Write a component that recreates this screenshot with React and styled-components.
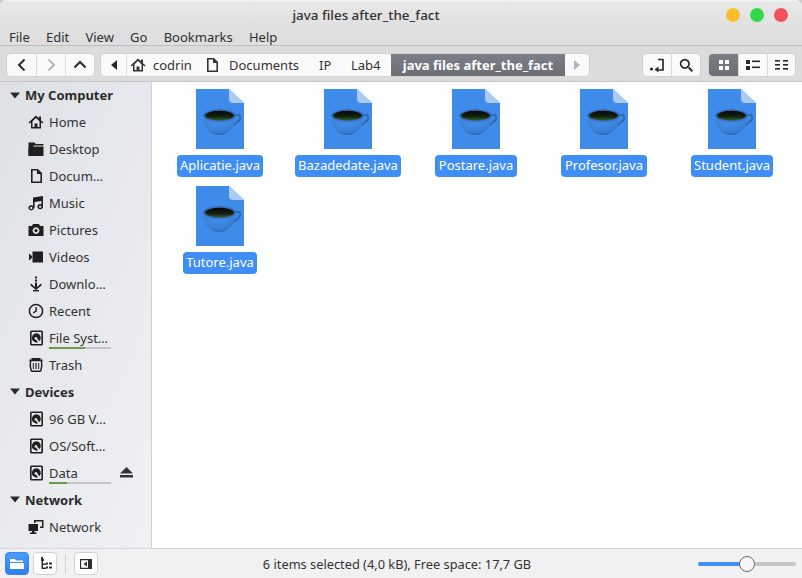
import React from 'react';
import styled, { createGlobalStyle } from 'styled-components';

const GlobalStyle = createGlobalStyle`
  html, body { margin: 0; padding: 0; background: #c9c9c9; }
  body { font-family: "Noto Sans", "Open Sans", sans-serif; font-size: 13px; color: #2f2f2f; }
`;

const Window = styled.div`
  width: 802px;
  height: 578px;
  display: flex;
  flex-direction: column;
  overflow: hidden;
  background: #dcdcdc;
  border-radius: 6px 6px 0 0;
`;

const TitleBar = styled.div`
  height: 26px;
  flex: none;
  padding: 2px 14px 0 0;
  box-sizing: border-box;
  display: flex;
  align-items: center;
  position: relative;
  background: linear-gradient(#e9e9e9, #e0e0e0);
  border-top: 1px solid #f2f2f2;
`;

const Title = styled.div`
  flex: 1;
  text-align: center;
  font-size: 13.4px;
  font-weight: 500;
  color: #303030;
  padding-left: 6px;
`;

const Lights = styled.div`
  display: flex;
  gap: 10px;
`;

const Light = styled.span`
  width: 14px;
  height: 14px;
  border-radius: 50%;
  background: ${p => p.$color};
`;

const MenuBar = styled.div`
  height: 20px;
  flex: none;
  display: flex;
  gap: 16.2px;
  padding: 2px 0 0 9px;
  box-sizing: border-box;
  align-items: center;
  background: #dfdfdf;
  border-bottom: 1px solid #bfbfbf;
  font-size: 13px;
`;

const Toolbar = styled.div`
  height: 36px;
  flex: none;
  box-sizing: border-box;
  display: flex;
  align-items: flex-start;
  padding: 8px 7px 0 7px;
  background: #dcdcdc;
  border-bottom: 1px solid #c4c4c4;
`;

const Group = styled.div`
  display: flex;
  height: 22px;
  background: #fafafa;
  border-radius: 4px;
  box-shadow: 0 0 0 1px #d2d2d2;
  margin-left: ${p => p.$gap || 0}px;
  overflow: hidden;
`;

const ToolButton = styled.div`
  width: ${p => p.$w || 29}px;
  height: 22px;
  display: flex;
  align-items: center;
  justify-content: center;
  color: ${p => (p.$active ? '#fff' : '#2a2a2a')};
  background: ${p => (p.$active ? 'linear-gradient(#7d7f87, #6c6e76)' : 'transparent')};
  border-left: ${p => (p.$first ? 'none' : '1px solid #dcdcdc')};
  box-sizing: border-box;
  flex: none;
`;

const Crumb = styled.div`
  height: 22px;
  display: flex;
  align-items: center;
  gap: ${p => p.$gap || 7}px;
  flex: none;
  width: ${p => p.$w}px;
  padding-left: ${p => p.$pad || 0}px;
  box-sizing: border-box;
  color: #333;
  border-left: ${p => (p.$divided ? '1px solid #dcdcdc' : 'none')};
`;

const ActiveCrumb = styled.div`
  width: 174px;
  height: 22px;
  flex: none;
  display: flex;
  align-items: center;
  justify-content: center;
  font-weight: 700;
  font-size: 13px;
  color: #fff;
  background: linear-gradient(#7d7f87, #6c6e76);
`;

const Body = styled.div`
  flex: 1;
  min-height: 0;
  display: flex;
  background: #fff;
`;

const Sidebar = styled.div`
  width: 152px;
  flex: none;
  box-sizing: border-box;
  background: linear-gradient(115deg, #dde1e6, #f0f1f4);
  border-right: 1px solid #d0d0d0;
`;

const Heading = styled.div`
  height: ${p => (p.$first ? 26 : 27)}px;
  display: flex;
  align-items: center;
  gap: 5px;
  padding-left: 10px;
  font-weight: 700;
  font-size: 13px;
  color: #2b2b2b;
`;

const Row = styled.div`
  height: 27px;
  display: flex;
  align-items: center;
  padding-left: 28px;
  position: relative;
  color: #333;
`;

const RowIcon = styled.span`
  width: 16px;
  height: 16px;
  margin-right: 5px;
  display: flex;
  color: #1f1f1f;
`;

const Capacity = styled.div`
  position: absolute;
  left: 49px;
  top: 23px;
  width: 62px;
  height: 2px;
  background: #c4c4c4;
`;

const CapacityFill = styled.div`
  height: 100%;
  background: #6b9b4a;
`;

const Eject = styled.span`
  position: absolute;
  left: 120px;
  top: 8px;
  display: flex;
`;

const FileGrid = styled.div`
  flex: 1;
  display: grid;
  grid-template-columns: repeat(5, 128px);
  grid-auto-rows: 97px;
  padding: 7px 0 0 4px;
  align-content: start;
`;

const FileItem = styled.div`
  display: flex;
  flex-direction: column;
  align-items: center;
`;

const FileLabel = styled.div`
  margin-top: 6px;
  height: 22px;
  line-height: 21px;
  padding: 0 3.5px;
  border-radius: 4px;
  background: #3f8ef5;
  color: #fff;
  font-size: 13px;
  white-space: nowrap;
`;

const StatusBar = styled.div`
  height: 30px;
  flex: none;
  box-sizing: border-box;
  display: flex;
  align-items: center;
  padding: 0 6px 0 5px;
  background: #f1f1f1;
  border-top: 1px solid #d6d6d6;
`;

const StatusButton = styled.div`
  width: 24px;
  height: 23px;
  margin-right: ${p => p.$mr || 0}px;
  border-radius: 4px;
  display: flex;
  align-items: center;
  justify-content: center;
  box-sizing: border-box;
  flex: none;
  background: ${p => (p.$active ? 'linear-gradient(#4a9bf8, #2f7fef)' : '#fff')};
  border: 1px solid ${p => (p.$active ? '#3a86ee' : '#d2d2d2')};
`;

const Divider = styled.div`
  width: 1px;
  height: 20px;
  background: #d2d2d2;
  margin-right: 8px;
`;

const StatusText = styled.div`
  flex: 1;
  text-align: center;
  font-size: 12.8px;
  color: #333;
  padding-right: 2px;
`;

const Slider = styled.div`
  width: 98px;
  height: 4px;
  border-radius: 2px;
  background: #c6c6c6;
  position: relative;
`;

const SliderFill = styled.div`
  height: 100%;
  border-radius: 2px;
  background: #3f8ef5;
`;

const Knob = styled.div`
  position: absolute;
  left: 41px;
  top: -6px;
  width: 16px;
  height: 16px;
  box-sizing: border-box;
  border-radius: 50%;
  background: #f7f7f7;
  border: 1px solid #6a6a72;
`;

const Svg = ({ children, size = 16, w, h, vb = '0 0 16 16' }) => (
  <svg width={w || size} height={h || size} viewBox={vb} fill="currentColor">{children}</svg>
);

const HomeIcon = () => (
  <Svg>
    <path d="M8 1.5 0.5 8.5 1.6 9.6 3 8.3V14.5H13V8.3L14.4 9.6 15.5 8.5 13 6.2V2.5H11V4.3ZM8 4 11.5 7.2V13H9.5V9.5H6.5V13H4.5V7.2Z" fillRule="evenodd" />
  </Svg>
);
const FolderIcon = () => (
  <Svg>
    <path d="M0.5 1.5H6.5L8 3H15.5V4.5H6L4.5 6V7H2V14.5H0.5Z" />
    <path d="M2.5 5.5H15.5V15H0.5V7.5Z" />
  </Svg>
);
const DocIcon = () => (
  <Svg>
    <path d="M3 1H10L14 5V15H3ZM4.6 2.6V13.4H12.4V6H9V2.6Z" fillRule="evenodd" />
  </Svg>
);
const MusicIcon = () => (
  <Svg>
    <path d="M5 2.5 15 1V11.5H13.4V6L6.6 7V13H5Z" />
    <path d="M3.2 10.2A2.8 2.6 0 1 0 3.21 10.2ZM3.2 11.8A1.2 1.1 0 1 1 3.19 11.8ZM12.2 9A2.8 2.6 0 1 0 12.21 9ZM12.2 10.6A1.2 1.1 0 1 1 12.19 10.6Z" fillRule="evenodd" />
  </Svg>
);
const CameraIcon = () => (
  <Svg>
    <path d="M5 2H11L12 4H15.5V14H0.5V4H4ZM8 5.2A3.4 3.4 0 1 0 8.01 5.2ZM8 7A1.6 1.6 0 1 1 7.99 7Z" fillRule="evenodd" />
  </Svg>
);
const VideoIcon = () => (
  <Svg>
    <path d="M4.5 2.5H15V13.5H4.5Z" />
    <path d="M1 4.5 4 7V9L1 11.5Z" />
  </Svg>
);
const DownloadIcon = () => (
  <Svg>
    <rect x="7" y="0.5" width="2" height="2" />
    <rect x="7" y="3.5" width="2" height="2" />
    <path d="M7 6.5H9V11L12.8 7.8 14 9 8 14 2 9 3.2 7.8 7 11Z" />
    <rect x="5" y="14" width="6" height="1.4" />
  </Svg>
);
const ClockIcon = () => (
  <Svg>
    <path d="M8 .7A7.3 7.3 0 1 0 8.01 .7ZM8 2.2A5.8 5.8 0 1 1 7.99 2.2Z" fillRule="evenodd" />
    <path d="M7.4 4H8.8V8.6L5.4 10.4 4.8 9.2 7.4 7.8Z" />
  </Svg>
);
const DriveIcon = () => (
  <Svg>
    <path d="M3.5 .5H13.5A1.5 1.5 0 0 1 15 2V14A1.5 1.5 0 0 1 13.5 15.5H3.5A1.5 1.5 0 0 1 2 14V2A1.5 1.5 0 0 1 3.5 .5ZM3.6 2.1V13.9H13.4V2.1Z" fillRule="evenodd" />
    <path d="M8.5 3.2A4.6 4.6 0 0 0 5.4 11.2L8.4 12.8 10 12.2 8 9.4A1 1 0 0 1 7 7.5 1.4 1.4 0 0 1 9.4 8.7L11.3 11.2A4.6 4.6 0 0 0 8.5 3.2Z" />
  </Svg>
);
const TrashIcon = () => (
  <Svg>
    <path d="M3.5 1H12.5V2.6H14.6V4.2H14.2Q15 8.5 13.6 13.5L12.5 15H3.5L2.4 13.5Q1 8.5 1.8 4.2H1.4V2.6H3.5ZM3.2 4.2Q2.5 8.5 3.8 13L4.4 13.5H11.6L12.2 13Q13.5 8.5 12.8 4.2Z" fillRule="evenodd" />
    <path d="M7.4 6H8.6V12H7.4ZM5 6H6Q5.4 9 6 12H5Q4.4 9 5 6ZM10 6H11Q11.6 9 11 12H10Q10.6 9 10 6Z" />
  </Svg>
);
const NetworkIcon = () => (
  <Svg>
    <path d="M6 1H15.5V9H12V7.5H14V2.5H7.5V4H6Z" />
    <path d="M.5 5H10V12H6.5V13.5H8.5V15H2V13.5H4V12H.5Z" />
  </Svg>
);

const Tri = () => (
  <Svg w={10} h={7} vb="0 0 10 7"><path d="M0 .5H10L5 6.5Z" /></Svg>
);

const JavaIcon = () => (
  <svg width="48" height="60" viewBox="0 0 48 60">
    <defs>
      <radialGradient id="cupBody" cx="45%" cy="30%" r="75%">
        <stop offset="0%" stopColor="#458fe9" />
        <stop offset="70%" stopColor="#3a80d8" />
        <stop offset="100%" stopColor="#2c60a8" />
      </radialGradient>
      <linearGradient id="cupHole" x1="0" y1="0" x2="0" y2="1">
        <stop offset="0%" stopColor="#050805" />
        <stop offset="60%" stopColor="#141f10" />
        <stop offset="100%" stopColor="#3f5c26" />
      </linearGradient>
    </defs>
    <path d="M0 0H33L48 14V60H0Z" fill="#3e8bea" />
    <path d="M33 0 48 14H37Q33 14 33 10Z" fill="#a9cbf5" />
    <path d="M37 26H41Q45.5 26 44 30 41 35 31 39" fill="none" stroke="#2d66b0" strokeWidth="2" />
    <path d="M7 26Q7 38 13 42 17 46 23 46 29 46 33 42 39 38 39 26Z" fill="url(#cupBody)" />
    <ellipse cx="23.5" cy="26.5" rx="16.5" ry="6.5" fill="#3470c0" />
    <ellipse cx="23.5" cy="26.6" rx="14.5" ry="4.8" fill="url(#cupHole)" />
  </svg>
);

const files = ['Aplicatie.java', 'Bazadedate.java', 'Postare.java', 'Profesor.java', 'Student.java', 'Tutore.java'];

const places = [
  { name: 'Home', icon: <HomeIcon /> },
  { name: 'Desktop', icon: <FolderIcon /> },
  { name: 'Docum…', icon: <DocIcon /> },
  { name: 'Music', icon: <MusicIcon /> },
  { name: 'Pictures', icon: <CameraIcon /> },
  { name: 'Videos', icon: <VideoIcon /> },
  { name: 'Downlo…', icon: <DownloadIcon /> },
  { name: 'Recent', icon: <ClockIcon /> },
  { name: 'File Syst…', icon: <DriveIcon />, used: 58 },
  { name: 'Trash', icon: <TrashIcon /> },
];

const devices = [
  { name: '96 GB V…', icon: <DriveIcon /> },
  { name: 'OS/Soft…', icon: <DriveIcon /> },
  { name: 'Data', icon: <DriveIcon />, used: 29, eject: true },
];

const SidebarRow = ({ item }) => (
  <Row>
    <RowIcon>{item.icon}</RowIcon>
    {item.name}
    {item.used !== undefined && (
      <Capacity><CapacityFill style={{ width: `${item.used}%` }} /></Capacity>
    )}
    {item.eject && (
      <Eject>
        <Svg w={13} h={11} vb="0 0 13 11"><path d="M6.5 0 13 6.5H0ZM0 8H13V10.5H0Z" /></Svg>
      </Eject>
    )}
  </Row>
);

export default function App() {
  return (
    <Window>
      <GlobalStyle />
      <TitleBar>
        <Title>java files after_the_fact</Title>
        <Lights>
          <Light $color="#fbbd2e" />
          <Light $color="#34d84a" />
          <Light $color="#f4525a" />
        </Lights>
      </TitleBar>
      <MenuBar>
        <span>File</span><span>Edit</span><span>View</span><span>Go</span><span>Bookmarks</span><span>Help</span>
      </MenuBar>
      <Toolbar>
        <Group>
          <ToolButton $first><Svg size={12} vb="0 0 12 12"><path d="M8.5 .5 3 6 8.5 11.5" fill="none" stroke="currentColor" strokeWidth="2" /></Svg></ToolButton>
          <ToolButton><Svg size={12} vb="0 0 12 12"><path d="M3.5 .5 9 6 3.5 11.5" fill="none" stroke="#b5b5b5" strokeWidth="2" /></Svg></ToolButton>
          <ToolButton><Svg size={12} vb="0 0 12 12"><path d="M.5 8.5 6 3 11.5 8.5" fill="none" stroke="currentColor" strokeWidth="2" /></Svg></ToolButton>
        </Group>
        <Group $gap={7}>
          <ToolButton $first $w={25}><Svg w={6} h={10} vb="0 0 6 10"><path d="M6 0V10L0 5Z" /></Svg></ToolButton>
          <Crumb $w={78} $pad={3} $divided><HomeIcon />codrin</Crumb>
          <Crumb $w={106} $gap={9}><DocIcon />Documents</Crumb>
          <Crumb $w={32} $pad={9}>IP</Crumb>
          <Crumb $w={49} $pad={9}>Lab4</Crumb>
          <ActiveCrumb>java files after_the_fact</ActiveCrumb>
          <ToolButton $w={24} $first><Svg w={6} h={10} vb="0 0 6 10"><path d="M0 0V10L6 5Z" fill="#b5b5b5" /></Svg></ToolButton>
        </Group>
        <Group $gap={54}>
          <ToolButton $first $w={28}>
            <Svg size={16}>
              <circle cx="2.5" cy="12" r="1.6" />
              <path d="M14 2V13H8" fill="none" stroke="currentColor" strokeWidth="1.7" />
              <path d="M9.5 9.5V15.5L5.5 12.5Z" />
              <path d="M9 2.5H14" fill="none" stroke="currentColor" strokeWidth="1.7" />
            </Svg>
          </ToolButton>
          <ToolButton $w={29}>
            <Svg size={15}><path d="M6.2 .8A5.4 5.4 0 1 0 6.21 .8ZM6.2 2.6A3.6 3.6 0 1 1 6.19 2.6ZM9.6 10.8 11 9.4 15 13.4 13.5 15Z" fillRule="evenodd" /></Svg>
          </ToolButton>
        </Group>
        <Group $gap={9}>
          <ToolButton $first $active $w={29}>
            <Svg size={12} vb="0 0 12 12"><rect x="1" y="1" width="4" height="4" /><rect x="7" y="1" width="4" height="4" /><rect x="1" y="7" width="4" height="4" /><rect x="7" y="7" width="4" height="4" /></Svg>
          </ToolButton>
          <ToolButton $w={29}>
            <Svg size={14} vb="0 0 14 12"><rect x="0" y="1" width="4" height="4" /><rect x="0" y="7" width="4" height="4" /><rect x="6" y="1.5" width="8" height="1.6" /><rect x="6" y="7.5" width="8" height="1.6" /></Svg>
          </ToolButton>
          <ToolButton $w={28}>
            <Svg size={14} vb="0 0 14 12"><rect x="0" y="1" width="5" height="1.6" /><rect x="0" y="5" width="5" height="1.6" /><rect x="0" y="9" width="5" height="1.6" /><rect x="8" y="1" width="5" height="1.6" /><rect x="8" y="5" width="5" height="1.6" /><rect x="8" y="9" width="5" height="1.6" /></Svg>
          </ToolButton>
        </Group>
      </Toolbar>
      <Body>
        <Sidebar>
          <Heading $first><Tri />My Computer</Heading>
          {places.map(p => <SidebarRow key={p.name} item={p} />)}
          <Heading><Tri />Devices</Heading>
          {devices.map(p => <SidebarRow key={p.name} item={p} />)}
          <Heading><Tri />Network</Heading>
          <SidebarRow item={{ name: 'Network', icon: <NetworkIcon /> }} />
        </Sidebar>
        <FileGrid>
          {files.map(f => (
            <FileItem key={f}>
              <JavaIcon />
              <FileLabel>{f}</FileLabel>
            </FileItem>
          ))}
        </FileGrid>
      </Body>
      <StatusBar>
        <StatusButton $active $mr={4}>
          <Svg w={14} h={12} vb="0 0 14 12"><path d="M0 1H5L6 2.5H13V4H0Z" fill="#fff" /><path d="M0 5H14V11H0Z" fill="#fff" /></Svg>
        </StatusButton>
        <StatusButton $mr={8}>
          <Svg size={13} vb="0 0 13 13"><path d="M2 0H4V2H5V4H4V6.5H7V5.5H9V7.5H7V8H4V10.5H7V9.5H9V11.5H7V12H2.5V4H2ZM10 5.5H13V7.5H10ZM10 9.5H13V11.5H10Z" /></Svg>
        </StatusButton>
        <Divider />
        <StatusButton>
          <Svg size={14} vb="0 0 14 14"><path d="M1 2H13V12H1ZM2.2 3.2V10.8H9V3.2Z" fillRule="evenodd" /><path d="M8 4.5V9.5L4.5 7Z" /></Svg>
        </StatusButton>
        <StatusText>6 items selected (4,0 kB), Free space: 17,7 GB</StatusText>
        <Slider>
          <SliderFill style={{ width: '50%' }} />
          <Knob />
        </Slider>
      </StatusBar>
    </Window>
  );
}
